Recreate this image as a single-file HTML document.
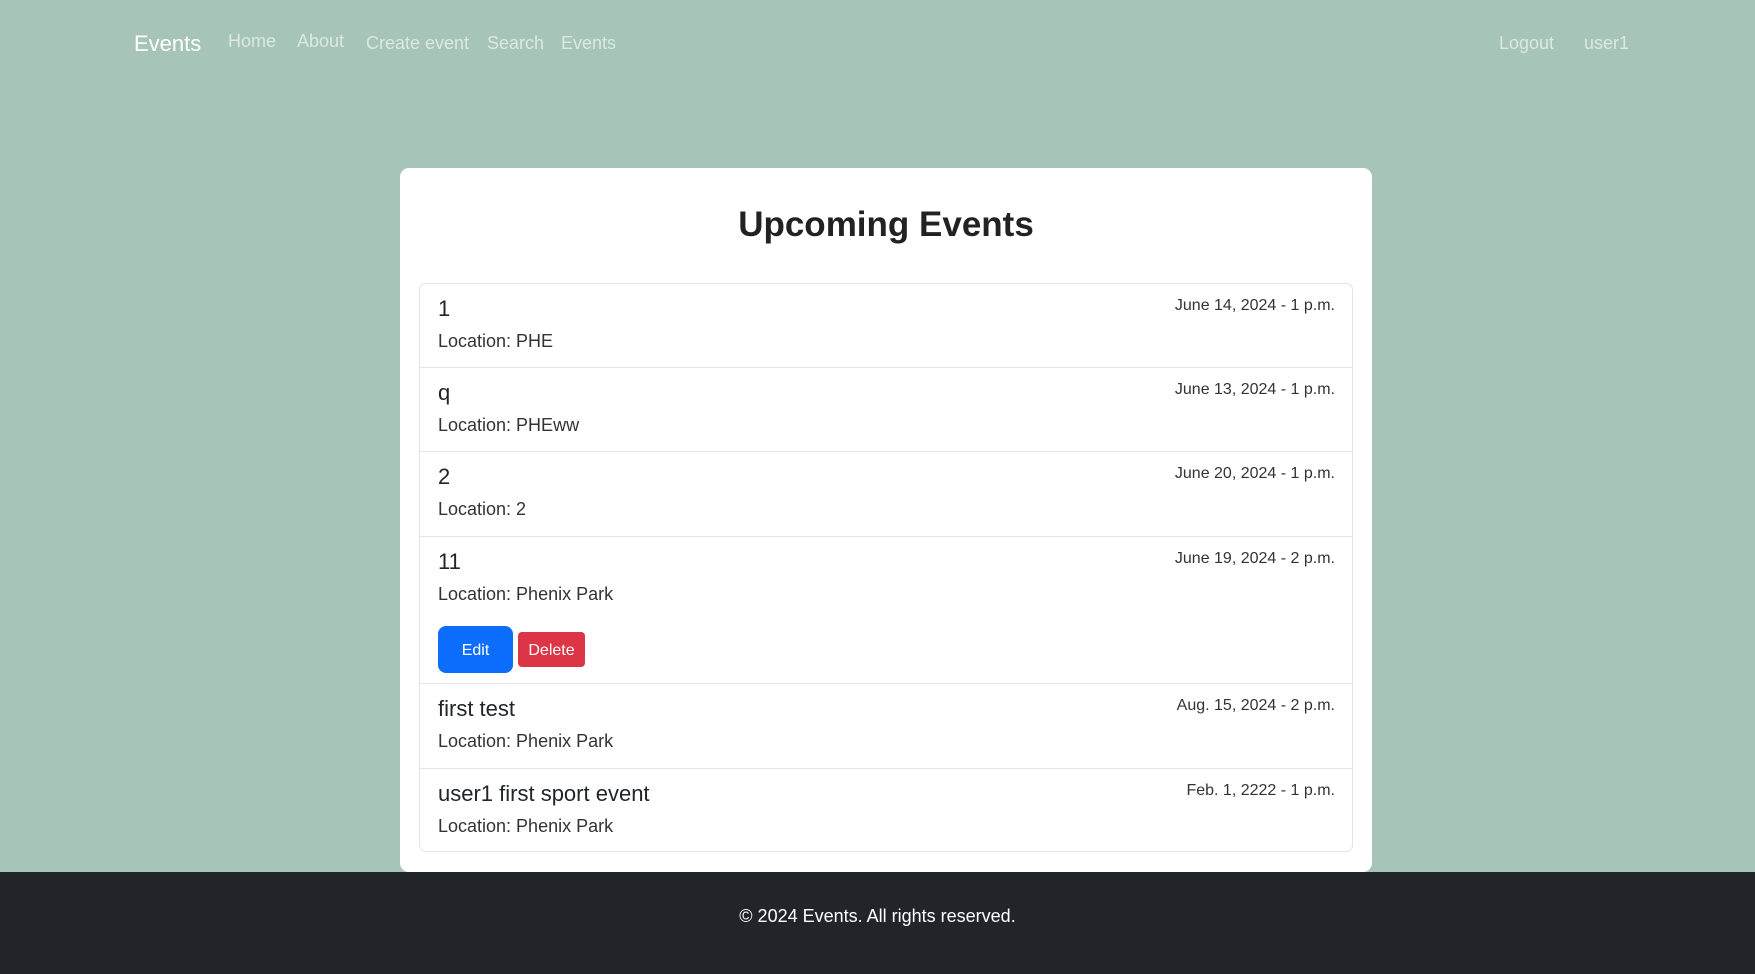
<!DOCTYPE html>
<html><head><meta charset="utf-8"><style>
*{box-sizing:border-box;margin:0;padding:0}
body{width:1755px;height:974px;background:#a6c5b8;font-family:"Liberation Sans",sans-serif;position:relative;overflow:hidden;color:#212529}
.a{position:absolute;white-space:nowrap}
.nav{color:rgba(255,255,255,.6);font-size:18px;top:33px}
.card{position:absolute;left:400px;top:168px;width:972px;height:704px;background:#fff;border-radius:9px}
.list{position:absolute;left:419px;top:283px;width:934px;height:569px;border:1px solid #e3e6e8;border-radius:7px}
.row{position:absolute;left:0;width:100%;border-bottom:1px solid #e3e6e8}
.t{position:absolute;left:18px;font-size:22px;top:12px}
.l{position:absolute;left:18px;font-size:18px;color:#333;top:47px}
.d{position:absolute;right:17px;font-size:16px;color:#333;top:13px}
footer{position:absolute;left:0;top:872px;width:1755px;height:102px;background:#212529;color:#fff;text-align:center;font-size:18px;padding-top:34px}
</style></head><body>
<div class="a" style="left:134px;top:31px;font-size:22px;color:#fff">Events</div>
<div class="a nav" style="left:228px;top:31px">Home</div>
<div class="a nav" style="left:297px;top:31px">About</div>
<div class="a nav" style="left:366px">Create event</div>
<div class="a nav" style="left:487px">Search</div>
<div class="a nav" style="left:561px">Events</div>
<div class="a nav" style="left:1499px">Logout</div>
<div class="a nav" style="left:1584px">user1</div>
<div class="card"><div class="a" style="left:0;width:972px;text-align:center;top:37px;font-size:35px;font-weight:bold;color:#222">Upcoming Events</div></div>
<div class="list">
<div class="row" style="top:0;height:84px"><div class="t">1</div><div class="l">Location: PHE</div><div class="d">June 14, 2024 - 1 p.m.</div></div>
<div class="row" style="top:84px;height:84px"><div class="t">q</div><div class="l">Location: PHEww</div><div class="d">June 13, 2024 - 1 p.m.</div></div>
<div class="row" style="top:168px;height:85px"><div class="t">2</div><div class="l">Location: 2</div><div class="d">June 20, 2024 - 1 p.m.</div></div>
<div class="row" style="top:253px;height:147px"><div class="t">11</div><div class="l">Location: Phenix Park</div><div class="d">June 19, 2024 - 2 p.m.</div>
<div class="a" style="left:18px;top:89px;width:75px;height:47px;background:#0d6efd;color:#fff;border-radius:8px;font-size:16px;text-align:center;line-height:49px">Edit</div>
<div class="a" style="left:98px;top:95px;width:67px;height:35px;background:#dc3545;color:#fff;border-radius:4px;font-size:16px;text-align:center;line-height:37px">Delete</div></div>
<div class="row" style="top:400px;height:85px"><div class="t">first test</div><div class="l">Location: Phenix Park</div><div class="d">Aug. 15, 2024 - 2 p.m.</div></div>
<div class="row" style="top:485px;height:83px;border:none"><div class="t">user1 first sport event</div><div class="l">Location: Phenix Park</div><div class="d">Feb. 1, 2222 - 1 p.m.</div></div>
</div>
<footer>© 2024 Events. All rights reserved.</footer>
</body></html>
